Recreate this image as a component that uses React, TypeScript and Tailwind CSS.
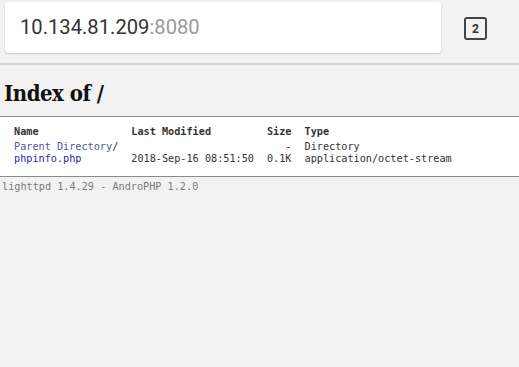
import React from "react";

const rows = [
  { name: "Parent Directory", slash: true, modified: "", size: "-", type: "Directory", color: "text-[#5555a8]" },
  { name: "phpinfo.php", slash: false, modified: "2018-Sep-16 08:51:50", size: "0.1K", type: "application/octet-stream", color: "text-[#2a2aa6]" },
];

const App = () => {
  return (
    <div className="w-[519px] h-[367px] bg-[#f2f2f2] overflow-hidden">
      <div className="h-[65px] border-b-2 border-[#d4d4d4] flex flex-row items-start pt-[2px]">
        <div className="ml-[5px] w-[436px] h-[51px] bg-white rounded-[3px] shadow-[0_1px_2px_rgba(0,0,0,0.18)] flex items-center pl-[15px]">
          <span className="font-['Roboto',sans-serif] text-[20.2px] text-[#333]">
            10.134.81.209<span className="text-[#9a9a9a]">:8080</span>
          </span>
        </div>
        <div className="ml-[23px] mt-[15px] w-[23px] h-[23px] border-2 border-[#444] rounded-[3px] flex items-center justify-center">
          <span className="font-['Roboto',sans-serif] font-bold text-[12px] leading-none text-[#333]">2</span>
        </div>
      </div>

      <h2 className="mt-[15px] mb-[10px] ml-[4px] font-['DejaVu_Serif_Condensed','DejaVu_Serif',serif] font-stretch-condensed font-bold text-[22px] leading-[26px] tracking-[-0.5px] text-[#111]">
        Index of /
      </h2>

      <div className="bg-white border-t border-b border-[#8a8a8a] pt-[9px] pb-[11px] font-['DejaVu_Sans_Mono',monospace] text-[10.2px] leading-[12px] text-[#333]">
        <table className="ml-[14px]">
          <thead>
            <tr>
              <th className="text-left font-bold pr-[13px] pb-[3px]">Name</th>
              <th className="text-left font-bold pr-[13px] pb-[3px]">Last Modified</th>
              <th className="text-right font-bold pr-[13px] pb-[3px]">Size</th>
              <th className="text-left font-bold pr-[13px] pb-[3px]">Type</th>
            </tr>
          </thead>
          <tbody>
            {rows.map((r) => (
              <tr key={r.name}>
                <td className="pr-[13px]">
                  <a href="#" className={r.color}>{r.name}</a>
                  {r.slash ? "/" : ""}
                </td>
                <td className="pr-[13px]">{r.modified}</td>
                <td className="pr-[13px] text-right">{r.size}</td>
                <td className="pr-[13px]">{r.type}</td>
              </tr>
            ))}
          </tbody>
        </table>
      </div>

      <div className="pt-[4px] pl-[2px] font-['DejaVu_Sans_Mono',monospace] text-[10.2px] leading-[12px] text-[#7a7a7a]">
        lighttpd 1.4.29 - AndroPHP 1.2.0
      </div>
    </div>
  );
};

export default App;
